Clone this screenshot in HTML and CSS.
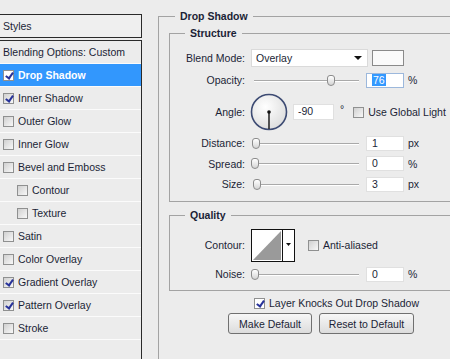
FILE: index.html
```html
<!DOCTYPE html>
<html lang="en">
<head>
    <meta charset="UTF-8">
    <meta name="viewport" content="width=device-width, initial-scale=1.0">
    <title>Layer Style - Drop Shadow</title>
    <link rel="stylesheet" href="styles.css">
</head>
<body>
    <div class="dialog">
        <div class="styles-panel">
            <div class="styles-head">Styles</div>
            <ul class="style-list">
                <li class="style-item">Blending Options: Custom</li>
                <li class="style-item selected"><span class="check on"></span>Drop Shadow</li>
                <li class="style-item"><span class="check on"></span>Inner Shadow</li>
                <li class="style-item"><span class="check"></span>Outer Glow</li>
                <li class="style-item"><span class="check"></span>Inner Glow</li>
                <li class="style-item"><span class="check"></span>Bevel and Emboss</li>
                <li class="style-item sub"><span class="check"></span>Contour</li>
                <li class="style-item sub"><span class="check"></span>Texture</li>
                <li class="style-item"><span class="check"></span>Satin</li>
                <li class="style-item"><span class="check"></span>Color Overlay</li>
                <li class="style-item"><span class="check on"></span>Gradient Overlay</li>
                <li class="style-item"><span class="check on"></span>Pattern Overlay</li>
                <li class="style-item"><span class="check"></span>Stroke</li>
            </ul>
        </div>

        <div class="settings">
            <fieldset class="group outer">
                <legend>Drop Shadow</legend>

                <fieldset class="group structure">
                    <legend>Structure</legend>
                    <div class="row h22">
                        <span class="label">Blend Mode:</span>
                        <div class="select">Overlay<span class="arrow"></span></div>
                        <div class="swatch"></div>
                    </div>
                    <div class="row h22">
                        <span class="label">Opacity:</span>
                        <div class="slider"><span class="thumb" style="left: 76px;"></span></div>
                        <div class="num focus"><span class="sel">76</span></div>
                        <span class="unit">%</span>
                    </div>
                    <div class="row h42">
                        <span class="label">Angle:</span>
                        <svg class="dial" width="38" height="38" viewBox="0 0 38 38">
                            <defs>
                                <radialGradient id="dialFill" cx="40%" cy="35%" r="70%">
                                    <stop offset="0" stop-color="#ffffff"/>
                                    <stop offset="1" stop-color="#dcdcdc"/>
                                </radialGradient>
                            </defs>
                            <circle cx="19" cy="19" r="17.5" fill="url(#dialFill)" stroke="#3d4b73" stroke-width="1.6"/>
                            <line x1="19" y1="19" x2="19" y2="36" stroke="#111" stroke-width="1.4"/>
                            <circle cx="19" cy="19" r="1.8" fill="#111"/>
                        </svg>
                        <div class="num angle">-90</div>
                        <span class="degree">°</span>
                        <span class="check global"></span>
                        <span class="check-text">Use Global Light</span>
                    </div>
                    <div class="row h20">
                        <span class="label">Distance:</span>
                        <div class="slider"><span class="thumb" style="left: 1px;"></span></div>
                        <div class="num">1</div>
                        <span class="unit">px</span>
                    </div>
                    <div class="row h21">
                        <span class="label">Spread:</span>
                        <div class="slider"><span class="thumb" style="left: 0px;"></span></div>
                        <div class="num">0</div>
                        <span class="unit">%</span>
                    </div>
                    <div class="row h20">
                        <span class="label">Size:</span>
                        <div class="slider"><span class="thumb" style="left: 2px;"></span></div>
                        <div class="num">3</div>
                        <span class="unit">px</span>
                    </div>
                </fieldset>

                <fieldset class="group quality">
                    <legend>Quality</legend>
                    <div class="row h32">
                        <span class="label">Contour:</span>
                        <svg class="contour" width="44" height="33" viewBox="0 0 44 33">
                            <rect x="0.5" y="0.5" width="43" height="32" fill="#fff" stroke="#111"/>
                            <polygon points="2,31 30,2 30,31" fill="#9a9a9a"/>
                            <line x1="31.5" y1="1" x2="31.5" y2="32" stroke="#111"/>
                            <polygon points="35,14 40,14 37.5,17" fill="#111"/>
                        </svg>
                        <span class="check anti"></span>
                        <span class="check-text">Anti-aliased</span>
                    </div>
                    <div class="row h20 noise">
                        <span class="label">Noise:</span>
                        <div class="slider"><span class="thumb" style="left: 0px;"></span></div>
                        <div class="num">0</div>
                        <span class="unit">%</span>
                    </div>
                </fieldset>

                <div class="row knock">
                    <span class="check on"></span>
                    <span class="check-text">Layer Knocks Out Drop Shadow</span>
                </div>
                <div class="row buttons">
                    <button class="button make">Make Default</button>
                    <button class="button reset">Reset to Default</button>
                </div>
            </fieldset>
        </div>
    </div>
</body>
</html>
```

FILE: styles.css
```css
body {
    margin: 0;
    width: 450px;
    height: 359px;
    overflow: hidden;
    background-color: #ececec;
    font-family: "Liberation Sans", Arial, sans-serif;
    font-size: 10.5px;
    color: #1b1f36;
}
.dialog {
    display: flex;
    height: 100%;
    overflow: hidden;
}

/* left list of styles */
.styles-panel {
    width: 143px;
    margin-left: -1px;
    padding-top: 14px;
    flex-shrink: 0;
    display: flex;
    flex-direction: column;
    box-sizing: border-box;
}
.styles-head {
    height: 22px;
    line-height: 22px;
    border: 1px solid #2a2a2a;
    padding-left: 3px;
    background-color: #efefef;
}
.style-list {
    list-style: none;
    margin: 2px 0 0;
    padding: 0;
    flex: 1;
    border: 1px solid #2a2a2a;
    border-bottom: none;
}
.style-item {
    height: 22px;
    border-bottom: 1px solid #fbfbfb;
    display: flex;
    align-items: center;
    padding-left: 3px;
}
.style-item .check {
    margin-right: 4px;
}
.style-item.sub {
    padding-left: 17px;
}
.style-item.selected {
    background-color: #3297fd;
    color: #fff;
    font-weight: bold;
}
.style-item.selected .check {
    background: #fff;
}

/* checkboxes */
.check {
    width: 11px;
    height: 11px;
    box-sizing: border-box;
    border: 1px solid #8f9090;
    background: linear-gradient(135deg, #d0d0d0, #f8f8f8);
    position: relative;
    flex-shrink: 0;
}
.check.on::after {
    content: "";
    position: absolute;
    left: 3px;
    top: 0;
    width: 3px;
    height: 6px;
    border: solid #27329a;
    border-width: 0 2px 2px 0;
    transform: rotate(35deg);
}
.check-text {
    margin-left: 4px;
    white-space: nowrap;
}

/* right settings */
.settings {
    flex: 1;
    min-width: 0;
    margin-left: 16px;
    padding-top: 10px;
    overflow: hidden;
}
.group {
    margin: 0;
    padding: 0;
    border: 1px solid #a3a3a3;
    min-width: 0;
}
.group legend {
    padding: 0 5px;
    font-weight: bold;
    line-height: 13px;
}
.outer {
    width: 330px;
    height: 400px;
    padding: 4px 0 0 10px;
    box-sizing: border-box;
}
.outer > legend {
    margin-left: 6px;
}
.structure, .quality {
    width: 300px;
}
.structure > legend, .quality > legend {
    margin-left: 15px;
}
.structure {
    padding: 7px 0;
}
.quality {
    margin-top: 7px;
    padding: 7px 0 6px;
}

.row {
    display: flex;
    align-items: center;
}
.h20 { height: 20px; }
.h21 { height: 21px; }
.h22 { height: 22px; }
.h32 { height: 32px; }
.h42 { height: 42px; }
.label {
    width: 75px;
    margin-right: 6px;
    text-align: right;
    flex-shrink: 0;
    white-space: nowrap;
}

.select {
    width: 117px;
    height: 18px;
    box-sizing: border-box;
    background-color: #fff;
    border: 1px solid #dadada;
    padding-left: 4px;
    display: flex;
    align-items: center;
}
.arrow {
    margin-left: auto;
    margin-right: 5px;
    border-left: 4px solid transparent;
    border-right: 4px solid transparent;
    border-top: 4px solid #111;
}
.swatch {
    width: 32px;
    height: 16px;
    box-sizing: border-box;
    margin-left: 4px;
    border: 1px solid #8a8a8a;
    background-color: #fafafa;
}

.slider {
    position: relative;
    width: 108px;
    height: 13px;
    flex-shrink: 0;
}
.slider::before {
    content: "";
    position: absolute;
    left: 3px;
    right: 0;
    top: 6px;
    height: 1px;
    background-color: #a9a9a9;
    box-shadow: 0 1px 0 #fff;
}
.thumb {
    position: absolute;
    top: 1px;
    width: 8px;
    height: 11px;
    box-sizing: border-box;
    border: 1px solid #8c8c8c;
    border-radius: 3px 3px 4px 4px;
    background: linear-gradient(#ffffff, #d5d5d5);
}

.num {
    width: 38px;
    height: 15px;
    box-sizing: border-box;
    margin-left: 7px;
    padding-left: 5px;
    line-height: 13px;
    background-color: #fff;
    border: 1px solid #e0e0e0;
    flex-shrink: 0;
}
.num.focus {
    border-color: #9cb8dc;
}
.sel {
    background-color: #3399ff;
    color: #fff;
    padding: 0 1px;
}
.unit {
    margin-left: 4px;
}

.dial {
    margin-left: -1px;
    flex-shrink: 0;
}
.num.angle {
    width: 41px;
    height: 16px;
    margin-left: 5px;
    padding-left: 4px;
}
.degree {
    margin-left: 6px;
    margin-top: -6px;
}
.check.global {
    margin-left: 9px;
}
.check.anti {
    margin-left: 13px;
}

.noise {
    margin-top: 3px;
}

.knock {
    height: 18px;
    margin-top: 3px;
    margin-left: 85px;
}
.knock .check {
    background: #fff;
}
.buttons {
    margin-top: 1px;
    margin-left: 59px;
    gap: 7px;
}
.button {
    height: 21px;
    padding: 0;
    border: 1px solid #707070;
    border-radius: 3px;
    background: linear-gradient(#f7f7f7, #dcdcdc);
    font-family: "Liberation Sans", Arial, sans-serif;
    font-size: 10.5px;
    color: #1b1f36;
}
.button.make {
    width: 84px;
}
.button.reset {
    width: 95px;
}
```
